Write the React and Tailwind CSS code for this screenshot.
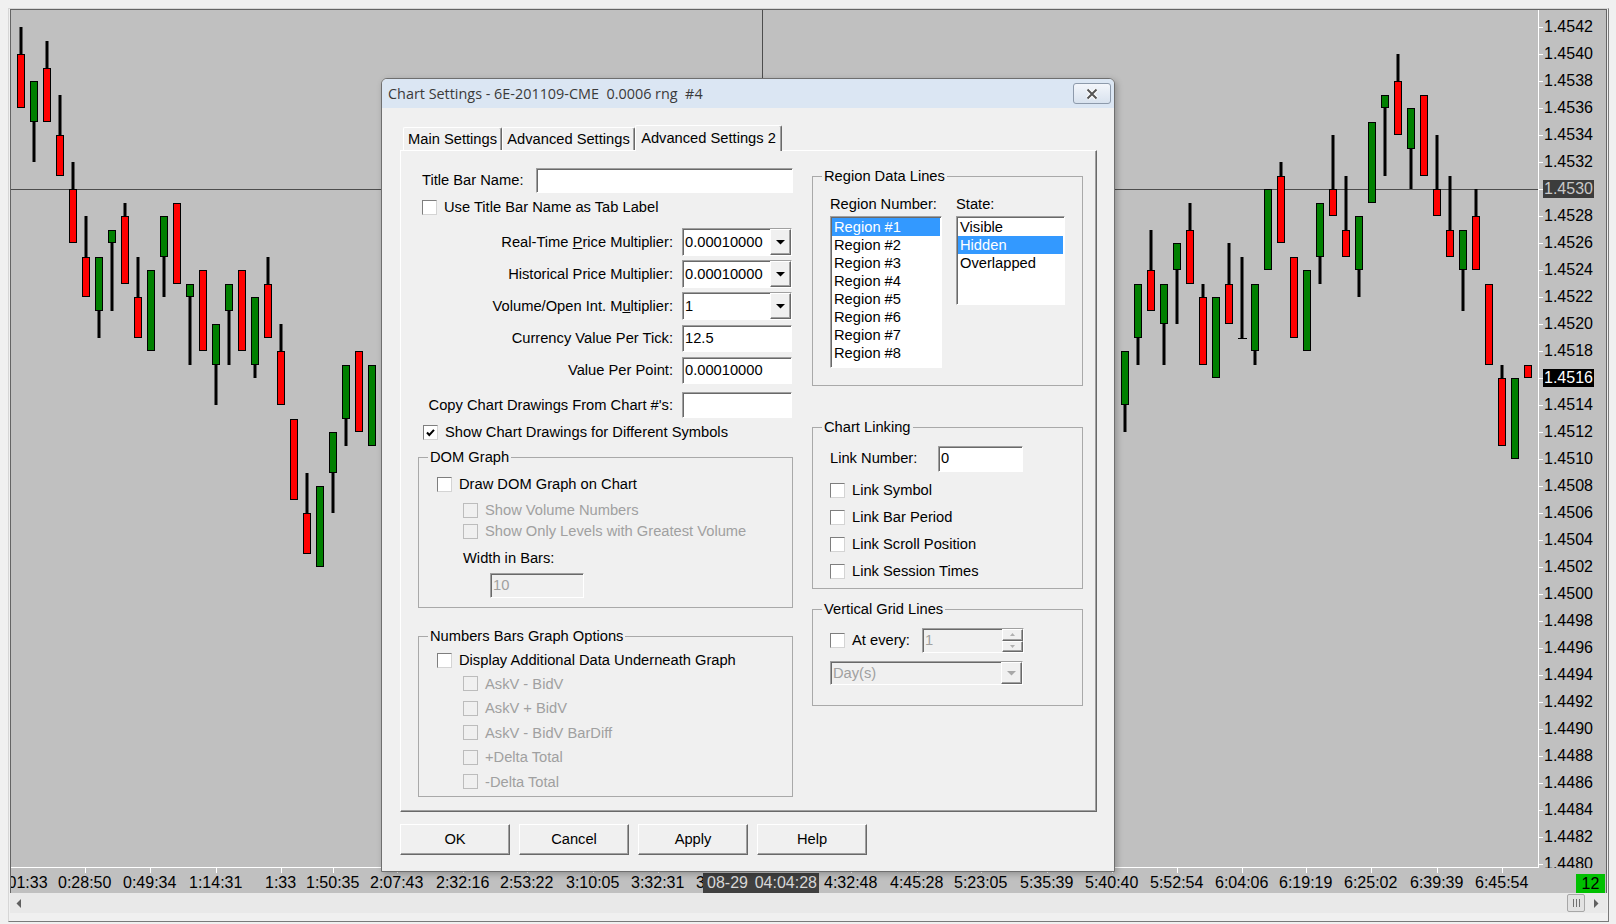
import React from 'react';

// price scale: 0.0001 per 13.5px, 1.4542 sits at y=27
const ty = (t) => Math.round(27 + 13.5 * t);

// [colour, bodyTop, bodyBottom, wickTop, wickBottom] in ticks below 1.4542
const LEFT = [
  ['r', 2, 6, 0, 6], ['g', 4, 7, 4, 10], ['r', 3, 7, 1, 7], ['r', 8, 11, 5, 11],
  ['r', 12, 16, 10, 16], ['r', 17, 20, 14, 20], ['g', 17, 21, 17, 23], ['g', 15, 16, 15, 21],
  ['r', 14, 19, 13, 19], ['r', 20, 23, 17, 23], ['g', 18, 24], ['g', 14, 17, 14, 20],
  ['r', 13, 19], ['g', 19, 20, 19, 25], ['r', 18, 24], ['g', 22, 25, 22, 28],
  ['g', 19, 21, 19, 25], ['r', 18, 24], ['g', 20, 25, 20, 26], ['r', 19, 23, 17, 23],
  ['r', 24, 28, 22, 28], ['r', 29, 35], ['r', 36, 39, 33, 39], ['g', 34, 40],
  ['g', 30, 33, 30, 36], ['g', 25, 29, 25, 31], ['r', 24, 30], ['g', 25, 31],
];

const RIGHT = [
  ['g', 24, 28, 24, 30], ['g', 19, 23, 19, 25], ['r', 18, 21, 15, 21], ['g', 19, 22, 19, 25],
  ['g', 16, 18, 16, 22], ['r', 15, 19, 13, 19], ['r', 20, 25, 19, 25], ['g', 20, 26],
  ['r', 19, 22, 16, 22], ['d', 23, 23, 17, 23], ['g', 19, 24, 19, 25], ['g', 12, 18],
  ['r', 11, 16, 10, 16], ['r', 17, 23], ['g', 18, 24], ['g', 13, 17, 13, 19],
  ['r', 12, 14, 8, 14], ['r', 15, 17, 11, 17], ['g', 14, 18, 14, 20], ['g', 7, 13],
  ['g', 5, 6, 5, 11], ['r', 4, 8, 2, 8], ['g', 6, 9, 6, 12], ['r', 5, 11],
  ['r', 12, 14, 8, 14], ['r', 15, 17, 11, 17], ['g', 15, 18, 15, 21], ['r', 14, 18, 12, 18],
  ['r', 19, 25], ['r', 26, 31, 25, 31], ['g', 26, 32], ['r', 25, 26],
];

const FILL = { r: '#ff0000', g: '#008000' };

const PRICES = Array.from({ length: 32 }, (_, i) => (1.4542 - i * 0.0002).toFixed(4));

const TIMES = [
  [7.5, '01:33'], [58, '0:28:50'], [123, '0:49:34'], [189, '1:14:31'], [265, '1:33'],
  [306, '1:50:35'], [370, '2:07:43'], [436, '2:32:16'], [500, '2:53:22'], [566, '3:10:05'],
  [631, '3:32:31'], [696, '3'], [703, 'HL'], [824, '4:32:48'], [890, '4:45:28'],
  [954, '5:23:05'], [1020, '5:35:39'], [1085, '5:40:40'], [1150, '5:52:54'], [1215, '6:04:06'],
  [1279, '6:19:19'], [1344, '6:25:02'], [1410, '6:39:39'], [1475, '6:45:54'],
];

const SUNKEN = 'border border-[#a0a0a0] border-r-white border-b-white shadow-[inset_1px_1px_0_#696969]';
const RAISED = 'border border-white border-r-[#696969] border-b-[#696969] shadow-[inset_-1px_-1px_0_#a0a0a0]';

function Candles({ data, start }) {
  return data.map(([c, b0, b1, w0 = b0, w1 = b1], i) => {
    const x = start + 13 * i;
    return (
      <g key={i}>
        {(w0 < b0 || w1 > b1 || c === 'd') && (
          <rect x={x + 2.5} y={ty(w0)} width="3" height={ty(w1) - ty(w0)} fill="#000" />
        )}
        {c === 'd' ? (
          <rect x={x} y={ty(b0)} width="9" height="1" fill="#000" />
        ) : (
          <rect x={x + 0.5} y={ty(b0) + 0.5} width="7" height={ty(b1) - ty(b0) - 1} fill={FILL[c]} stroke="#000" />
        )}
      </g>
    );
  });
}

function Triangle({ color = '#000' }) {
  return (
    <svg width="9" height="5" viewBox="0 0 9 5">
      <polygon points="0,0 9,0 4.5,4.5" fill={color} />
    </svg>
  );
}

function Check({ checked, disabled }) {
  return (
    <span
      className={`w-[15px] h-[15px] shrink-0 border flex items-center justify-center ${
        disabled ? 'bg-[#f0f0f0] border-[#bcbcbc]' : 'bg-white border-[#7e7e7e] border-r-[#d4d4d4] border-b-[#d4d4d4]'
      }`}
    >
      {checked && (
        <svg width="11" height="11" viewBox="0 0 11 11">
          <path d="M2 5.5 L4.3 8 L9 2.8" fill="none" stroke="#000" strokeWidth="2" />
        </svg>
      )}
    </span>
  );
}

function CheckRow({ label, checked, disabled, className = '' }) {
  return (
    <div className={`flex items-center gap-[7px] ${className}`}>
      <Check checked={checked} disabled={disabled} />
      <span className={`whitespace-nowrap ${disabled ? 'text-[#a0a0a0]' : ''}`}>{label}</span>
    </div>
  );
}

function Input({ value = '', disabled, className = '' }) {
  return (
    <div className={`${SUNKEN} flex items-center pl-[2px] ${disabled ? 'bg-[#f0f0f0] text-[#a0a0a0]' : 'bg-white'} ${className}`}>
      {value}
    </div>
  );
}

function Combo({ value, disabled, className = '' }) {
  return (
    <div className={`${SUNKEN} flex items-stretch ${disabled ? 'bg-[#f0f0f0] text-[#a0a0a0]' : 'bg-white'} ${className}`}>
      <span className="flex-1 flex items-center pl-[2px]">{value}</span>
      <span className={`${RAISED} w-[21px] bg-[#f0f0f0] flex items-center justify-center`}>
        <Triangle color={disabled ? '#a8a8a8' : '#000'} />
      </span>
    </div>
  );
}

function Spinner({ className = '' }) {
  return (
    <div className={`${SUNKEN} flex items-stretch bg-[#f0f0f0] text-[#a0a0a0] ${className}`}>
      <span className="flex-1 flex items-center pl-[2px]">1</span>
      <span className="w-[21px] flex flex-col">
        <span className={`${RAISED} flex-1 flex items-center justify-center`}>
          <svg width="5" height="3" viewBox="0 0 5 3"><polygon points="0,3 5,3 2.5,0" fill="#b0b0b0" /></svg>
        </span>
        <span className={`${RAISED} flex-1 flex items-center justify-center`}>
          <svg width="5" height="3" viewBox="0 0 5 3"><polygon points="0,0 5,0 2.5,3" fill="#b0b0b0" /></svg>
        </span>
      </span>
    </div>
  );
}

function LabeledRow({ label, children, className = '' }) {
  return (
    <div className={`h-[32px] flex items-center justify-end gap-[9px] pr-[1px] ${className}`}>
      <span className="whitespace-nowrap">{label}</span>
      {children}
    </div>
  );
}

function Group({ title, className = '', children }) {
  return (
    <fieldset className={`border border-[#a9a9a9] ${className}`}>
      <legend className="ml-[9px] px-[2px] leading-[17px]">{title}</legend>
      {children}
    </fieldset>
  );
}

function ListBox({ items, selected, className = '' }) {
  return (
    <div className={`${SUNKEN} bg-white pt-px px-px ${className}`}>
      {items.map((t, i) => (
        <div key={t} className={`h-[18px] leading-[18px] pl-[2px] ${i === selected ? 'bg-[#3399ff] text-white' : ''}`}>
          {t}
        </div>
      ))}
    </div>
  );
}

function Button({ children }) {
  return (
    <div className={`${RAISED} w-[110px] h-[31px] bg-[#f0f0f0] flex items-center justify-center`}>{children}</div>
  );
}

function Tab({ label, active, className = '' }) {
  return (
    <div
      className={`border-t border-l border-white border-r border-r-[#696969] shadow-[inset_-1px_0_0_#a0a0a0] rounded-t-[2px] flex items-center justify-center whitespace-nowrap ${
        active ? 'relative z-10 h-[26px] mb-[-1px] bg-[#f0f0f0]' : 'h-[23px]'
      } ${className}`}
    >
      {label}
    </div>
  );
}

function ChartSettingsDialog() {
  return (
    <div className="absolute left-[381px] top-[78px] w-[734px] h-[794px] border border-[#6f6f6f] rounded-t-[6px] bg-[#f0f0f0] flex flex-col overflow-hidden shadow-[2px_2px_6px_rgba(0,0,0,0.25)]">
      {/* title bar */}
      <div className="h-[29px] shrink-0 bg-[#dbe6f3] flex items-center pl-[6px] pr-[3px]">
        <span className="font-['Open_Sans',sans-serif] text-[14.4px] text-[#3a3a3a] whitespace-pre">
          Chart Settings - 6E-201109-CME  0.0006 rng  #4
        </span>
        <div className="ml-auto w-[38px] h-[21px] border border-[#8d9aab] rounded-[3px] bg-linear-to-b from-[#f3f6fb] to-[#d8e2ee] flex items-center justify-center">
          <svg width="14" height="12" viewBox="0 0 14 12">
            <path d="M2.5 1.5 L11.5 10.5 M11.5 1.5 L2.5 10.5" stroke="#fff" strokeWidth="4" />
            <path d="M2.5 1.5 L11.5 10.5 M11.5 1.5 L2.5 10.5" stroke="#555" strokeWidth="2" />
          </svg>
        </div>
      </div>

      <div className="pl-[18px] pr-[17px] pt-[17px] flex flex-col text-[14.7px]">
        {/* tabs */}
        <div className="h-[25px] flex items-end pl-[3px]">
          <Tab label="Main Settings" className="w-[99px]" />
          <Tab label="Advanced Settings" className="w-[133px]" />
          <Tab label="Advanced Settings 2" active className="w-[147px]" />
        </div>

        {/* tab page */}
        <div className="h-[662px] border border-white border-r-[#696969] border-b-[#696969] shadow-[inset_-1px_-1px_0_#a0a0a0] flex gap-[19px] pl-[17px] pt-[17px]">
          {/* left column */}
          <div className="w-[375px] flex flex-col">
            <div className="h-[25px] flex items-center">
              <span className="pl-[4px]">Title Bar Name:</span>
              <Input className="ml-auto w-[257px] h-[25px]" />
            </div>
            <CheckRow className="h-[28px] pl-[4px]" label="Use Title Bar Name as Tab Label" />

            <div className="mt-[5px] flex flex-col">
              <LabeledRow label={<>Real-Time <u>P</u>rice Multiplier:</>}>
                <Combo className="w-[110px] h-[28px]" value="0.00010000" />
              </LabeledRow>
              <LabeledRow label="Historical Price Multiplier:">
                <Combo className="w-[110px] h-[28px]" value="0.00010000" />
              </LabeledRow>
              <LabeledRow label={<>Volume/Open Int. M<u>u</u>ltiplier:</>}>
                <Combo className="w-[110px] h-[28px]" value="1" />
              </LabeledRow>
              <LabeledRow label="Currency Value Per Tick:">
                <Input className="w-[110px] h-[27px]" value="12.5" />
              </LabeledRow>
              <LabeledRow label="Value Per Point:">
                <Input className="w-[110px] h-[27px]" value="0.00010000" />
              </LabeledRow>
            </div>
            <LabeledRow className="mt-[3px]" label="Copy Chart Drawings From Chart #'s:">
              <Input className="w-[110px] h-[26px]" />
            </LabeledRow>
            <CheckRow className="h-[22px] pl-[5px]" checked label="Show Chart Drawings for Different Symbols" />

            <Group title="DOM Graph" className="mt-[5.5px] pb-[9px]">
              <CheckRow className="mt-[8px] h-[22px] pl-[18px]" label="Draw DOM Graph on Chart" />
              <CheckRow className="mt-[4px] h-[21px] pl-[44px]" disabled label="Show Volume Numbers" />
              <CheckRow className="h-[21px] pl-[44px]" disabled label="Show Only Levels with Greatest Volume" />
              <div className="mt-[6px] h-[22px] flex items-center pl-[44px]">Width in Bars:</div>
              <Input className="mt-[3.5px] ml-[71px] w-[94px] h-[25px]" disabled value="10" />
            </Group>

            <Group title="Numbers Bars Graph Options" className="mt-[20px] pb-[2px]">
              <CheckRow className="mt-[4.5px] h-[22px] pl-[18px]" label="Display Additional Data Underneath Graph" />
              {['AskV - BidV', 'AskV + BidV', 'AskV - BidV BarDiff', '+Delta Total', '-Delta Total'].map((t) => (
                <CheckRow key={t} className="h-[24.5px] pl-[44px]" disabled label={t} />
              ))}
            </Group>
          </div>

          {/* right column */}
          <div className="w-[271px] flex flex-col">
            <Group title="Region Data Lines" className="pb-[17px]">
              <div className="mt-[9.5px] pl-[17px] flex gap-[14px]">
                <div className="w-[112px] flex flex-col">
                  <div className="h-[18px] leading-[18px] whitespace-nowrap">Region Number:</div>
                  <ListBox
                    className="mt-[3px] h-[152px]"
                    selected={0}
                    items={['Region #1', 'Region #2', 'Region #3', 'Region #4', 'Region #5', 'Region #6', 'Region #7', 'Region #8']}
                  />
                </div>
                <div className="w-[109px] flex flex-col">
                  <div className="h-[18px] leading-[18px]">State:</div>
                  <ListBox className="mt-[3px] h-[89px]" selected={1} items={['Visible', 'Hidden', 'Overlapped']} />
                </div>
              </div>
            </Group>

            <Group title="Chart Linking" className="mt-[33px] pb-[3px]">
              <div className="mt-[10px] h-[26px] flex items-center pl-[17px]">
                <span className="w-[108px]">Link Number:</span>
                <Input className="w-[85px] h-[26px]" value="0" />
              </div>
              <CheckRow className="mt-[5.5px] h-[27px] pl-[17px]" label="Link Symbol" />
              <CheckRow className="h-[27px] pl-[17px]" label="Link Bar Period" />
              <CheckRow className="h-[27px] pl-[17px]" label="Link Scroll Position" />
              <CheckRow className="h-[27px] pl-[17px]" label="Link Session Times" />
            </Group>

            <Group title="Vertical Grid Lines" className="mt-[12px] pb-[20px]">
              <div className="mt-[10px] h-[25px] flex items-center pl-[17px]">
                <CheckRow className="w-[92px]" label="At every:" />
                <Spinner className="w-[102px] h-[25px]" />
              </div>
              <Combo disabled className="mt-[8px] ml-[17px] w-[193px] h-[24px]" value="Day(s)" />
            </Group>
          </div>
        </div>

        {/* buttons */}
        <div className="flex gap-[9px] mt-[12px]">
          <Button>OK</Button>
          <Button>Cancel</Button>
          <Button>Apply</Button>
          <Button>Help</Button>
        </div>
      </div>
    </div>
  );
}

function TimeAxis() {
  return (
    <div className="h-[25px] flex flex-col">
      <svg width="1527" height="5" viewBox="11 0 1527 5" className="block shrink-0">
        {TIMES.filter(([, t]) => t.length === 7).map(([x]) => (
          <rect key={x} x={Math.round(x + 27)} y="0" width="1" height="5" fill="#fff" />
        ))}
        <rect x="281" y="0" width="1" height="5" fill="#fff" />
      </svg>
      <div className="h-[20px] flex items-center text-[16px] leading-[20px]">
        <div className="flex-1 min-w-0 overflow-hidden">
          <div className="flex -ml-[3.5px]">
            {TIMES.map(([x, t], i) => {
              const w = i < TIMES.length - 1 ? TIMES[i + 1][0] - x : 60;
              if (t === 'HL') {
                return (
                  <div key={x} className="shrink-0" style={{ width: w }}>
                    <div className="w-[116px] h-[20px] bg-[#404040] text-[#d8d8d8] flex whitespace-pre pl-[4px]">
                      <span>08-29</span>
                      <span className="ml-auto pr-[2px]">04:04:28</span>
                    </div>
                  </div>
                );
              }
              return (
                <div key={x} className="shrink-0 whitespace-nowrap" style={{ width: w }}>
                  {t}
                </div>
              );
            })}
          </div>
        </div>
        <div className="mr-[1px] w-[29px] h-[19px] bg-[#00c000] flex items-center justify-center leading-[19px] shrink-0">
          12
        </div>
      </div>
    </div>
  );
}

function PriceAxis() {
  return (
    <div className="w-[68px] border-l border-white overflow-hidden pt-[3.5px] text-[16px]">
      {PRICES.map((p) => (
        <div key={p} className="h-[27px] flex items-center">
          <span className="w-[4px] h-px bg-white shrink-0" />
          <span
            className={`h-[18px] leading-[18px] px-px ${
              p === '1.4530' ? 'bg-[#3c3c3c] text-[#c8c8c8]' : p === '1.4516' ? 'bg-black text-white' : ''
            }`}
          >
            {p}
          </span>
        </div>
      ))}
    </div>
  );
}

export default function App() {
  return (
    <div className="relative w-[1616px] h-[924px] overflow-hidden bg-[#f0f0f0] pt-[8px] pl-[8px] font-['Liberation_Sans',Arial,sans-serif] text-black">
      <div className="w-[1601px] h-[914px] border border-[#d6d6d6] border-r-[#7a7a7a] border-b-[#7a7a7a] px-[1px] flex flex-col">
        <div className="h-[884px] shrink-0 border-t border-l border-r border-[#646464] bg-[#c0c0c0] flex flex-col">
          <div className="flex h-[858px]">
            <div className="w-[1527px] border-b border-white">
              <svg width="1527" height="857" viewBox="11 10 1527 857" className="block">
                <rect x="11" y="189" width="1527" height="1" fill="#4d4d4d" />
                <rect x="762" y="10" width="1" height="857" fill="#4d4d4d" />
                <Candles data={LEFT} start={17} />
                <Candles data={RIGHT} start={1121} />
              </svg>
            </div>
            <PriceAxis />
          </div>
          <TimeAxis />
        </div>

        {/* horizontal scrollbar */}
        <div className="h-[20px] shrink-0 bg-[#e9e9e9] flex items-center">
          <span className="w-[17px] flex justify-center">
            <svg width="5" height="9" viewBox="0 0 5 9"><polygon points="5,0 5,9 0.5,4.5" fill="#606060" /></svg>
          </span>
          <span className="ml-auto w-[18px] h-[18px] border border-[#a7a7a7] rounded-[2px] bg-[#e2e2e2] flex items-center justify-center gap-[2px]">
            <span className="w-px h-[8px] bg-[#707070]" />
            <span className="w-px h-[8px] bg-[#707070]" />
            <span className="w-px h-[8px] bg-[#707070]" />
          </span>
          <span className="w-[22px] flex justify-center">
            <svg width="5" height="9" viewBox="0 0 5 9"><polygon points="0,0 0,9 4.5,4.5" fill="#606060" /></svg>
          </span>
        </div>
      </div>

      <ChartSettingsDialog />
    </div>
  );
}
